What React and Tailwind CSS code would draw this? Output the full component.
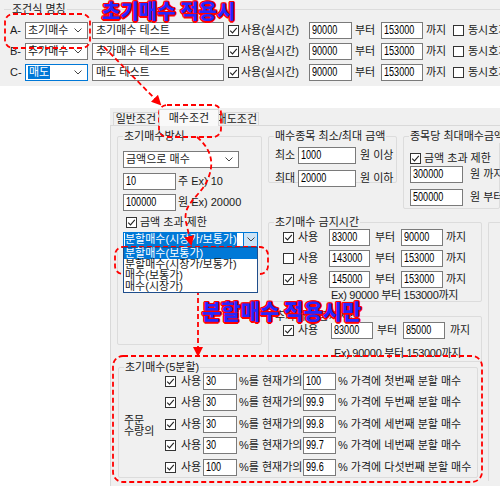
import React from 'react';

const TOP_ROWS = [
  { k: 'A', type: '초기매수', name: '초기매수 테스트' },
  { k: 'B', type: '추가매수', name: '추가매수 테스트' },
  { k: 'C', type: '매도', name: '매도 테스트', sel: true },
];

const SPLIT_ROWS = [
  { qty: '30', pct: '100', nth: '첫번째', mt: '' },
  { qty: '30', pct: '99.9', nth: '두번째', mt: 'mt-[4px]' },
  { qty: '30', pct: '99.8', nth: '세번째', mt: 'mt-[5px]' },
  { qty: '30', pct: '99.7', nth: '네번째', mt: 'mt-[4px]' },
  { qty: '100', pct: '99.6', nth: '다섯번째', mt: 'mt-[5px]' },
];

const BAN_ROWS = [
  { on: true, from: '83000', to: '90000' },
  { on: false, from: '143000', to: '153000' },
  { on: true, from: '145000', to: '153000' },
];

function Check({ on }) {
  return (
    <div className="w-[11px] h-[11px] shrink-0 border border-[#333] bg-white flex items-center justify-center">
      {on && (
        <svg width="9" height="9" viewBox="0 0 9 9">
          <path d="M1.2 4.6 L3.5 6.9 L7.8 1.9" fill="none" stroke="#222" strokeWidth="1.1" />
        </svg>
      )}
    </div>
  );
}

function Num({ v, w }) {
  return (
    <div className={`h-[17px] shrink-0 bg-white border border-[#7a7a7a] overflow-hidden pl-[2px] ${w}`}>
      <span className="inline-block origin-left scale-x-[0.7] text-[13px] leading-[14px] font-['Liberation_Sans',sans-serif] text-black whitespace-nowrap">{v}</span>
    </div>
  );
}

function Chevron() {
  return (
    <svg width="8" height="5" viewBox="0 0 8 5" className="shrink-0">
      <path d="M0.5 0.5 L4 4 L7.5 0.5" fill="none" stroke="#444" strokeWidth="1" />
    </svg>
  );
}

function Combo({ w, focus, children }) {
  return (
    <div className={`${w} h-[17px] shrink-0 bg-white border ${focus ? 'border-[#0078d7]' : 'border-[#7a7a7a]'} flex items-center pl-[2px] pr-[5px]`}>
      <div className="flex-1 min-w-0 flex whitespace-nowrap overflow-hidden">{children}</div>
      <Chevron />
    </div>
  );
}

function Group({ label, className, children }) {
  return (
    <div className={`relative shrink-0 border border-[#dcdcdc] rounded-[2px] ${className}`}>
      <span className="absolute left-[5px] -top-[7px] px-[1px] bg-[#f0f0f0] leading-[13px] whitespace-nowrap">{label}</span>
      {children}
    </div>
  );
}

const NOTE = "absolute whitespace-nowrap font-['Noto_Sans_CJK_KR',sans-serif] font-black leading-[24px] text-[#2626ff] [text-shadow:1px_1px_0_#f00,-1px_-1px_0_#f00,1px_-1px_0_#f00,-1px_1px_0_#f00,0_1.5px_0_#f00,0_-1.5px_0_#f00,1.5px_0_0_#f00,-1.5px_0_0_#f00]";

export default function App() {
  return (
    <div className="relative w-[500px] h-[486px] overflow-hidden bg-white text-[11px] leading-[13px] text-[#1a1a1a] font-['Liberation_Sans','Noto_Sans_CJK_KR',sans-serif]">

      {/* 조건식 명칭 */}
      <div className="h-[86px] pt-[9px] bg-[#f0f0f0]">
        <div className="relative ml-[4px] border-t border-[#dcdcdc]">
          <span className="absolute left-[7px] -top-[7px] px-[1px] bg-[#f0f0f0] leading-[13px]">조건식 명칭</span>
        </div>
        <div className="mt-[12px] flex flex-col gap-[4px]">
          {TOP_ROWS.map(r => (
            <div key={r.k} className="h-[17px] flex items-center whitespace-nowrap">
              <span className="ml-[10px] w-[15px] shrink-0">{r.k}-</span>
              <Combo w="w-[63px]" focus={r.sel}>
                {r.sel ? <span className="bg-[#0078d7] text-white px-[1px] leading-[13px]">{r.type}</span> : <span>{r.type}</span>}
              </Combo>
              <div className="ml-[4px] w-[132px] h-[17px] shrink-0 bg-white border border-[#7a7a7a] pl-[3px] leading-[15px]">{r.name}</div>
              <div className="ml-[4px]"><Check on /></div>
              <span className="ml-[2px] w-[68px] shrink-0">사용(실시간)</span>
              <Num v="90000" w="w-[43px]" />
              <span className="ml-[3px] w-[26px] shrink-0">부터</span>
              <Num v="153000" w="w-[42px]" />
              <span className="ml-[3px] w-[27px] shrink-0">까지</span>
              <Check />
              <span className="ml-[4px]">동시호가</span>
            </div>
          ))}
        </div>
      </div>

      {/* 매수조건 탭 */}
      <div className="ml-[110px] mt-[22px] h-[378px] bg-[#f0f0f0] flex flex-col">
        <div className="h-[17px] shrink-0 flex items-end pl-[3px] whitespace-nowrap">
          <div className="w-[46px] h-[13px] border border-b-0 border-[#d9d9d9] flex items-center justify-center leading-[12px]">일반조건</div>
          <div className="relative z-10 -mb-px w-[60px] h-[17px] bg-[#f9f9f9] border border-b-0 border-[#d9d9d9] flex items-center justify-center">매수조건</div>
          <div className="w-[40px] h-[13px] border-t border-r border-[#d9d9d9] flex items-center justify-end pr-[1px] leading-[12px]">매도조건</div>
        </div>

        <div className="flex-1 border-t border-l border-[#d9d9d9] pl-[6px] pt-[10px] flex items-start">
          <div className="w-[365px] shrink-0 flex flex-col">
            <div className="h-[231px] flex items-start">

              <Group label="초기매수방식" className="w-[145px] h-[209px] pl-[5px] pt-[14px]">
                <Combo w="w-[116px]"><span>금액으로 매수</span></Combo>
                <div className="mt-[5px] flex items-center whitespace-nowrap">
                  <Num v="10" w="w-[53px]" />
                  <span className="ml-[2px]">주 Ex) 10</span>
                </div>
                <div className="mt-[4px] flex items-center whitespace-nowrap">
                  <Num v="100000" w="w-[53px]" />
                  <span className="ml-[2px]">원 Ex) 20000</span>
                </div>
                <div className="mt-[6px] pl-[3px] h-[11px] flex items-center">
                  <Check on />
                  <span className="ml-[3px]">금액 초과 제한</span>
                </div>
                <div className="relative mt-[4px] w-[135px]">
                  <div className="h-[15px] bg-white border border-[#0078d7] flex items-center whitespace-nowrap">
                    <div className="flex-1 min-w-0 pl-[1px] overflow-hidden">
                      <span className="bg-[#0078d7] text-white leading-[13px] inline-block">분할매수(시장가/보통가)</span>
                    </div>
                    <div className="w-[14px] h-full bg-[#cce4f7] border-l border-[#0078d7] flex items-center justify-center"><Chevron /></div>
                  </div>
                  <div className="absolute left-0 top-full w-[135px] bg-white border border-[#1f4e8c] z-10 whitespace-nowrap">
                    <div className="h-[11px] leading-[11px] bg-[#0078d7] text-white pl-[1px]">분할매수(보통가)</div>
                    <div className="h-[11px] leading-[11px] pl-[1px]">분할매수(시장가/보통가)</div>
                    <div className="h-[11px] leading-[11px] pl-[1px]">매수(보통가)</div>
                    <div className="h-[11px] leading-[11px] pl-[1px]">매수(시장가)</div>
                  </div>
                </div>
              </Group>

              <div className="ml-[6px] w-[214px] shrink-0 flex flex-col">
                <div className="flex items-start">
                  <Group label="매수종목 최소/최대 금액" className="w-[129px] h-[47px] pl-[6px] pt-[10px]">
                    <div className="flex items-center whitespace-nowrap">
                      <span className="w-[23px] shrink-0">최소</span>
                      <Num v="1000" w="w-[58px]" />
                      <span className="ml-[4px]">원 이상</span>
                    </div>
                    <div className="mt-[6px] flex items-center whitespace-nowrap">
                      <span className="w-[23px] shrink-0">최대</span>
                      <Num v="20000" w="w-[58px]" />
                      <span className="ml-[4px]">원 이하</span>
                    </div>
                  </Group>
                  <Group label="종목당 최대매수금액" className="ml-[6px] w-[97px] h-[73px] pl-[6px] pt-[16px]">
                    <div className="h-[11px] flex items-center whitespace-nowrap">
                      <Check on />
                      <span className="ml-[3px]">금액 초과 제한</span>
                    </div>
                    <div className="mt-[2px] flex items-center whitespace-nowrap">
                      <Num v="300000" w="w-[53px]" />
                      <span className="ml-[7px]">원 까지</span>
                    </div>
                    <div className="mt-[6px] flex items-center whitespace-nowrap">
                      <Num v="500000" w="w-[53px]" />
                      <span className="ml-[7px]">원 부터</span>
                    </div>
                  </Group>
                </div>

                <Group label="초기매수 금지시간" className="mt-[13px] w-[214px] h-[80px] pl-[14px] pt-[6px]">
                  <div className="flex flex-col gap-[4px]">
                    {BAN_ROWS.map((r, i) => (
                      <div key={i} className="flex items-center whitespace-nowrap">
                        <Check on={r.on} />
                        <span className="ml-[4px] w-[31px] shrink-0">사용</span>
                        <Num v={r.from} w="w-[41px]" />
                        <span className="ml-[5px] w-[26px] shrink-0">부터</span>
                        <Num v={r.to} w="w-[42px]" />
                        <span className="ml-[3px]">까지</span>
                      </div>
                    ))}
                  </div>
                  <div className="mt-[1px] pl-[48px] whitespace-nowrap tracking-[-0.3px]">Ex) 90000 부터 153000까지</div>
                </Group>

                <Group label="추가매수 금지시간" className="mt-[14px] w-[214px] h-[46px] pl-[14px] pt-[5px]">
                  <div className="flex items-center whitespace-nowrap">
                    <Check on />
                    <span className="ml-[4px] w-[33px] shrink-0">사용</span>
                    <Num v="83000" w="w-[42px]" />
                    <span className="ml-[4px] w-[26px] shrink-0">부터</span>
                    <Num v="85000" w="w-[42px]" />
                    <span className="ml-[5px]">까지</span>
                  </div>
                  <div className="mt-[8px] pl-[51px] whitespace-nowrap tracking-[-0.3px]">Ex) 90000 부터 153000까지</div>
                </Group>
              </div>
            </div>

            <Group label="초기매수(5분할)" className="ml-[1px] w-[360px] h-[111px] flex">
              <div className="w-[46px] shrink-0 pl-[5px] pt-[6px] flex flex-col justify-center leading-[10.5px]">
                <span>주문</span>
                <span>수량의</span>
              </div>
              <div className="pt-[5px] flex flex-col">
                {SPLIT_ROWS.map((r, i) => (
                  <div key={i} className={`flex items-center whitespace-nowrap ${r.mt}`}>
                    <Check on />
                    <span className="ml-[5px] w-[22px] shrink-0">사용</span>
                    <Num v={r.qty} w="w-[34px]" />
                    <span className="ml-[2px] w-[64px] shrink-0">%를 현재가의</span>
                    <Num v={r.pct} w="w-[33px]" />
                    <span className="ml-[2px]">% 가격에 {r.nth} 분할 매수</span>
                  </div>
                ))}
              </div>
            </Group>
          </div>

          <div className="ml-[6px] mt-[86px] w-[30px] h-[259px] shrink-0 border-l border-t border-[#dcdcdc] rounded-tl-[2px]" />
        </div>
      </div>

      {/* red dashed marks */}
      <svg className="absolute inset-0 pointer-events-none" width="500" height="486" viewBox="0 0 500 486">
        <defs>
          <marker id="ah" markerUnits="userSpaceOnUse" markerWidth="10" markerHeight="10" refX="8" refY="5" orient="auto">
            <path d="M0 0 L10 5 L0 10 z" fill="#ff0000" />
          </marker>
        </defs>
        <g fill="none" stroke="#ff0000" strokeWidth="1.8" strokeDasharray="5 3">
          <rect x="5" y="14" width="85" height="34" rx="8" />
          <path d="M104 47 L160 104" markerEnd="url(#ah)" />
          <rect x="159" y="105" width="62" height="32" rx="8" />
          <path d="M197 137 C 212 150, 216 165, 205 185 C 195 200, 183 205, 186 222 L 191 244" markerEnd="url(#ah)" />
          <rect x="115" y="247" width="153" height="27" rx="8" />
          <path d="M198 274 L198 355" markerEnd="url(#ah)" />
          <rect x="113" y="356" width="369" height="126" rx="10" />
        </g>
      </svg>

      <div className={`${NOTE} text-[20px] left-[102px] -top-[1px]`}>초기매수 적용시</div>
      <div className={`${NOTE} text-[21px] left-[202px] top-[298px]`}>분할매수 적용시만</div>
    </div>
  );
}
